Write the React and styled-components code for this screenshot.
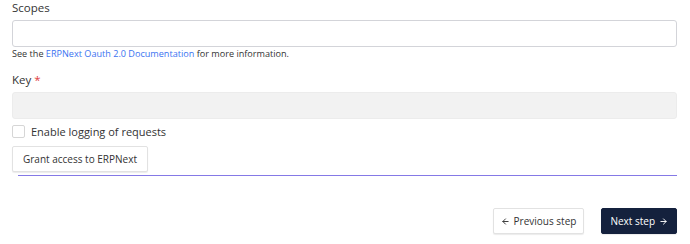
import React from "react";
import styled, { createGlobalStyle } from "styled-components";
import { ArrowLeft, ArrowRight } from "lucide-react";

const Global = createGlobalStyle`
  body {
    margin: 0;
    background: #ffffff;
    font-family: "Open Sans", "Liberation Sans", sans-serif;
    color: #2b2b2b;
  }
`;

const Page = styled.div`
  width: 690px;
  height: 244px;
  box-sizing: border-box;
  padding: 1px 13px 0 12px;
  display: flex;
  flex-direction: column;
`;

const Label = styled.div`
  font-size: 11.5px;
  line-height: 14px;
  color: #333;
  margin-top: ${(p) => p.$top || 0}px;
`;

const Required = styled.span`
  color: #e03c3c;
  margin-left: 3px;
`;

const Input = styled.div`
  height: 27px;
  box-sizing: border-box;
  margin-top: 5px;
  border-radius: 3px;
  border: 1px solid ${(p) => (p.$disabled ? "#ececec" : "#d3d4d9")};
  background: ${(p) => (p.$disabled ? "#f2f2f2" : "#ffffff")};
`;

const Help = styled.div`
  font-size: 9.1px;
  line-height: 12px;
  margin-top: 1px;
  color: #333;
`;

const Link = styled.a`
  color: #3b73f1;
  text-decoration: none;
`;

const CheckRow = styled.label`
  display: flex;
  align-items: center;
  gap: 6px;
  height: 14px;
  margin-top: 5px;
  font-size: 11px;
  color: #333;
`;

const Box = styled.span`
  width: 11px;
  height: 11px;
  border: 1px solid #d6d6d6;
  border-radius: 2px;
  background: #fff;
`;

const Button = styled.button`
  font-family: inherit;
  font-size: 10px;
  font-weight: 500;
  height: 26px;
  padding: 0 ${(p) => p.$px || 10}px;
  border-radius: 2px;
  cursor: pointer;
  display: inline-flex;
  align-items: center;
  gap: 4px;
  border: 1px solid ${(p) => (p.$primary ? "#14213d" : "#e2e2e2")};
  background: ${(p) => (p.$primary ? "#14213d" : "#ffffff")};
  color: ${(p) => (p.$primary ? "#ffffff" : "#333")};
  box-shadow: 0 1px 1px rgba(0, 0, 0, 0.08);
`;

const GrantRow = styled.div`
  margin-top: 8px;
`;

const Divider = styled.div`
  height: 1px;
  background: #8579e6;
  margin: 3px 0 0 6px;
`;

const Footer = styled.div`
  display: flex;
  justify-content: flex-end;
  gap: 17px;
  margin-top: 32px;
`;

export default function App() {
  return (
    <Page>
      <Global />
      <Label>Scopes</Label>
      <Input />
      <Help>
        See the <Link href="#">ERPNext Oauth 2.0 Documentation</Link> for more
        information.
      </Help>
      <Label $top={13}>
        Key<Required>*</Required>
      </Label>
      <Input $disabled />
      <CheckRow>
        <Box />
        Enable logging of requests
      </CheckRow>
      <GrantRow>
        <Button $px={10}>Grant access to ERPNext</Button>
      </GrantRow>
      <Divider />
      <Footer>
        <Button $px={7}>
          <ArrowLeft size={9} strokeWidth={2.5} />
          Previous step
        </Button>
        <Button $primary $px={8}>
          Next step
          <ArrowRight size={9} strokeWidth={2.5} />
        </Button>
      </Footer>
    </Page>
  );
}
